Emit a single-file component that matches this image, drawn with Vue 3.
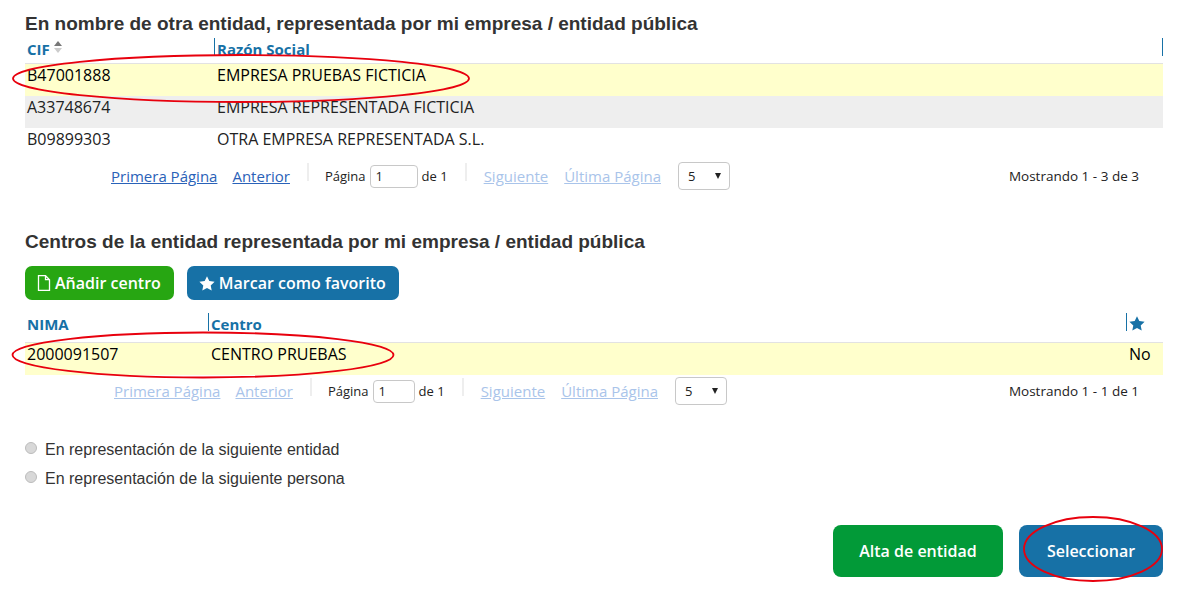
<script setup>
const empresas = [
  { cif: 'B47001888', nombre: 'EMPRESA PRUEBAS FICTICIA', selected: true },
  { cif: 'A33748674', nombre: 'EMPRESA REPRESENTADA FICTICIA', odd: true },
  { cif: 'B09899303', nombre: 'OTRA EMPRESA REPRESENTADA S.L.' }
]

const pagerEmpresas = { first: false, last: true, total: 'Mostrando 1 - 3 de 3' }
const pagerCentros = { first: true, last: true, total: 'Mostrando 1 - 1 de 1' }
</script>

<template>
  <main class="page">
    <h2 class="title first">En nombre de otra entidad, representada por mi empresa / entidad pública</h2>

    <div class="thead cols-a">
      <div class="th">CIF
        <svg class="sort" width="8" height="14" viewBox="0 0 8 14"><path d="M4 1 8 6H0z" fill="#777" /><path d="M4 13 8 8H0z" fill="#ccc" /></svg>
      </div>
      <div class="th line">Razón Social</div>
      <div class="th line end"></div>
    </div>
    <div v-for="e in empresas" :key="e.cif" class="row cols-a" :class="{ selected: e.selected, odd: e.odd }">
      <div class="td">{{ e.cif }}</div>
      <div class="td name">{{ e.nombre }}</div>
    </div>

    <div class="pager pager-a">
      <div class="links prev" :class="{ off: pagerEmpresas.first }">
        <a>Primera Página</a>
        <a>Anterior</a>
      </div>
      <span class="sep"></span>
      <div class="page-num">Página <input class="num" value="1" /> de 1</div>
      <span class="sep"></span>
      <div class="links next" :class="{ off: pagerEmpresas.last }">
        <a>Siguiente</a>
        <a>Última Página</a>
      </div>
      <div class="size">5<span class="caret"></span></div>
      <div class="total">{{ pagerEmpresas.total }}</div>
    </div>

    <h2 class="title second">Centros de la entidad representada por mi empresa / entidad pública</h2>

    <div class="actions">
      <button class="btn green">
        <svg width="14" height="16" viewBox="0 0 14 16"><path d="M1.5.7h7l4 4v10.600h-11zM8.500.7v4h4" fill="none" stroke="#fff" stroke-width="1.3" /></svg>
        Añadir centro
      </button>
      <button class="btn blue">
        <svg width="16" height="15" viewBox="0 0 16 15"><path d="M8 .3l2.300 4.800 5.300.7-3.900 3.600 1 5.200L8 12.100l-4.700 2.500 1-5.200L.4 5.800l5.300-.7z" fill="#fff" /></svg>
        Marcar como favorito
      </button>
    </div>

    <div class="thead cols-b">
      <div class="th">NIMA</div>
      <div class="th line">Centro</div>
      <div class="th line star">
        <svg width="16" height="15" viewBox="0 0 16 15"><path d="M8 .3l2.300 4.800 5.300.7-3.900 3.600 1 5.200L8 12.100l-4.700 2.500 1-5.200L.4 5.800l5.300-.7z" fill="#1771a6" /></svg>
      </div>
    </div>
    <div class="row cols-b selected">
      <div class="td">2000091507</div>
      <div class="td name">CENTRO PRUEBAS</div>
      <div class="td fav">No</div>
    </div>

    <div class="pager pager-b">
      <div class="links prev" :class="{ off: pagerCentros.first }">
        <a>Primera Página</a>
        <a>Anterior</a>
      </div>
      <span class="sep"></span>
      <div class="page-num">Página <input class="num" value="1" /> de 1</div>
      <span class="sep"></span>
      <div class="links next" :class="{ off: pagerCentros.last }">
        <a>Siguiente</a>
        <a>Última Página</a>
      </div>
      <div class="size">5<span class="caret"></span></div>
      <div class="total">{{ pagerCentros.total }}</div>
    </div>

    <div class="radios">
      <label class="radio"><span class="dot"></span>En representación de la siguiente entidad</label>
      <label class="radio"><span class="dot"></span>En representación de la siguiente persona</label>
    </div>

    <div class="footer">
      <button class="big alta">Alta de entidad</button>
      <button class="big sel">Seleccionar</button>
    </div>

    <!-- red circles drawn over the screenshot -->
    <svg class="marks" width="1189" height="596" viewBox="0 0 1189 596">
      <g fill="none" stroke="#e8000d" stroke-width="1.8">
        <ellipse cx="241" cy="78.500" rx="228" ry="23.500" />
        <ellipse cx="203" cy="355" rx="190.500" ry="22.500" />
        <ellipse cx="1093" cy="549" rx="69" ry="32" />
      </g>
    </svg>
  </main>
</template>

<style scoped>
.page {
  position: relative;
  width: 1189px;
  height: 596px;
  box-sizing: border-box;
  padding: 0 26px 0 25px;
  overflow: hidden;
  background: #fff;
  font-family: "Open Sans", sans-serif;
  color: #222;
}

.title {
  margin: 0;
  font-family: "Liberation Sans", Arial, sans-serif;
  font-size: 19px;
  line-height: 21px;
  font-weight: bold;
  color: #333;
}

.first {
  box-sizing: border-box;
  height: 38px;
  padding-top: 13px;
}

.second {
  margin-top: 39px;
}

.thead {
  display: grid;
  height: 26px;
  border-bottom: 1px solid #e2e2e2;
  box-sizing: border-box;
}

.cols-a {
  grid-template-columns: 189px 1fr 1px;
}

.cols-b {
  grid-template-columns: 183px 1fr 37px;
}

.th {
  box-sizing: border-box;
  padding-left: 2px;
  height: 18px;
  font-size: 15px;
  line-height: 22px;
  font-weight: 700;
  color: #1771a6;
  white-space: nowrap;
}

.line {
  border-left: 1px solid #1771a6;
}

.end {
  padding: 0;
}

.sort {
  vertical-align: 1px;
}

.star {
  padding-top: 3px;
  line-height: 0;
}

.row {
  display: grid;
  height: 32px;
  font-size: 16px;
  line-height: 23px;
  color: #222;
}

.row.selected {
  background: #ffffcc;
  color: #000;
}

.row.odd {
  background: #eeeeee;
}

.td {
  padding-left: 2px;
}

.name {
  padding-left: 3px;
}

.cols-a .name {
  grid-column: 2 / 4;
}

.fav {
  padding-left: 3px;
}

.pager {
  display: flex;
  align-items: center;
  height: 32px;
  font-size: 13.5px;
  color: #222;
}

.pager-a {
  padding-left: 86px;
}

.pager-b {
  padding-left: 89px;
}

.links {
  display: flex;
  gap: 16px;
  font-size: 15px;
}

.links.prev {
  gap: 15px;
}

.links.next {
  margin-left: 1px;
}

.links a {
  color: #2a62b8;
  text-decoration: underline;
}

.links.off a {
  color: #a9c4ea;
}

.sep {
  width: 2px;
  height: 18px;
  margin: -8px 16px 0 17px;
  background: #eeeeee;
}

.page-num {
  display: flex;
  align-items: center;
  gap: 4px;
  font-size: 13px;
  white-space: nowrap;
}

.num {
  width: 48px;
  height: 23px;
  box-sizing: border-box;
  padding: 0 5px;
  border: 1px solid #c8c8c8;
  border-radius: 4px;
  font: 13px "Open Sans", sans-serif;
  color: #222;
}

.pager-b .num {
  width: 42px;
}

.size {
  position: relative;
  box-sizing: border-box;
  width: 52px;
  height: 28px;
  margin: -1px 0 0 17px;
  padding-left: 9px;
  border: 1px solid #c8c8c8;
  border-radius: 4px;
  line-height: 26px;
  font-size: 13px;
}

.caret {
  position: absolute;
  right: 8px;
  top: 10px;
  border-left: 3px solid transparent;
  border-right: 3px solid transparent;
  border-top: 6px solid #222;
}

.total {
  margin-left: auto;
  padding-right: 24px;
  white-space: nowrap;
}

.actions {
  display: flex;
  gap: 13px;
  margin-top: 14px;
}

.btn {
  display: flex;
  align-items: center;
  gap: 4px;
  height: 34px;
  padding: 0 13px 0 12px;
  border: 0;
  border-radius: 7px;
  font: 600 16px "Open Sans", sans-serif;
  color: #fff;
}

.btn.green {
  background: #27a612;
}

.btn.blue {
  background: #1771a6;
}

.actions + .thead {
  margin-top: 13px;
  height: 30px;
}

.radios {
  margin-top: 32px;
  display: flex;
  flex-direction: column;
  gap: 8px;
  font-family: "Liberation Sans", Arial, sans-serif;
  font-size: 16px;
  color: #333;
}

.radio {
  display: flex;
  align-items: center;
  gap: 8px;
  height: 21px;
}

.dot {
  width: 12px;
  height: 12px;
  margin-top: -3px;
  box-sizing: border-box;
  border: 1px solid #bcbcbc;
  border-radius: 50%;
  background: #d8d8d8;
}

.footer {
  display: flex;
  justify-content: flex-end;
  gap: 16px;
  margin-top: 36px;
}

.big {
  height: 52px;
  border: 0;
  border-radius: 8px;
  font: 600 16px "Open Sans", sans-serif;
  color: #fff;
}

.alta {
  width: 170px;
  background: #029a38;
}

.sel {
  width: 144px;
  background: #1771a6;
}

.marks {
  position: absolute;
  left: 0;
  top: 0;
  pointer-events: none;
}
</style>
